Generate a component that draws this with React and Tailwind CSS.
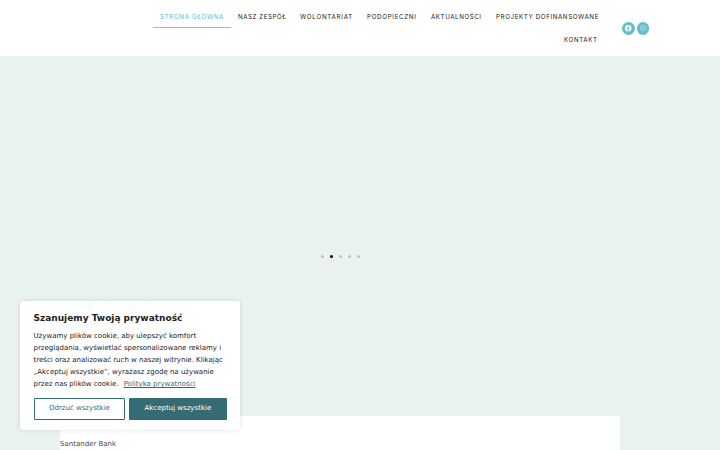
import React from 'react';

const navItems = [
  { label: 'STRONA GŁÓWNA', box: 'w-[78px]', text: 'tracking-[0.67px]', active: true },
  { label: 'NASZ ZESPÓŁ', box: 'w-[62px]', text: 'tracking-[0.55px]' },
  { label: 'WOLONTARIAT', box: 'w-[67px]', text: 'tracking-[0.75px]' },
  { label: 'PODOPIECZNI', box: 'w-[64px]', text: 'tracking-[0.69px]' },
  { label: 'AKTUALNOŚCI', box: 'w-[65px]', text: 'tracking-[0.58px]' },
  { label: 'PROJEKTY DOFINANSOWANE', box: 'w-[116px]', text: 'tracking-[0.62px]' },
  { label: 'KONTAKT', box: 'w-[48px]', text: 'tracking-[0.62px]' },
];

function NavItem({ item }) {
  return (
    <a
      href="#"
      className={`flex h-[23px] items-center justify-start whitespace-nowrap border-b pl-[7.5px] pt-[1.5px] ${item.box} ${
        item.active ? 'border-[#7cc8da] text-[#5fb9cc]' : 'border-transparent text-[#171717]'
      }`}
    >
      <span className={item.text}>{item.label}</span>
    </a>
  );
}

function Header() {
  return (
    <header className="flex h-14 bg-white">
      <nav className="ml-[140.5px] mt-[5px] flex h-[46px] w-[464px] flex-wrap justify-end font-['Inter',sans-serif] text-[6.2px] font-normal">
        {navItems.map(item => (
          <NavItem key={item.label} item={item} />
        ))}
      </nav>
      <div className="ml-[17.5px] mt-[22px] flex gap-[2px]">
        <a href="#" aria-label="Facebook" className="flex size-[12.5px] items-center justify-center rounded-full bg-[#65bdca]">
          <svg viewBox="0 0 24 24" className="size-[6.5px]">
            <circle cx="12" cy="12" r="12" fill="white" />
            <path d="M10 24v-8.5H7V12h3V9.4C10 6.4 11.8 5 14.3 5l2.3.2v2.7H15c-1.4 0-1.7.7-1.7 1.7V12h3.2l-.5 3.5h-2.7V24z" fill="#65bdca" />
          </svg>
        </a>
        <a href="#" aria-label="Instagram" className="flex size-[12.5px] items-center justify-center rounded-full bg-[#65bdca]">
          <svg viewBox="0 0 24 24" className="size-[6px]" fill="none" stroke="#c9e9ed" strokeWidth="2">
            <rect x="2" y="2" width="20" height="20" rx="5" />
            <circle cx="12" cy="12" r="4.5" />
            <circle cx="18" cy="6" r="1" fill="white" stroke="none" />
          </svg>
        </a>
      </div>
    </header>
  );
}

function Slider() {
  return (
    <section className="relative h-[360px]">
      <svg viewBox="0 0 12 24" className="absolute left-[65px] top-[110px] h-6 w-3" fill="none" stroke="#edf0f0">
        <path d="M9 5 3 12l6 7" />
      </svg>
      <svg viewBox="0 0 12 24" className="absolute left-[610px] top-[110px] h-6 w-3" fill="none" stroke="#edf0f0">
        <path d="m3 5 6 7-6 7" />
      </svg>
      <div className="flex w-[680px] justify-center gap-[6px] pt-[199.25px]">
        {[0, 1, 2, 3, 4].map(i => (
          <span key={i} className={`size-[3px] rounded-full ${i === 1 ? 'bg-black' : 'bg-[#b9c1c0]'}`} />
        ))}
      </div>
    </section>
  );
}

function CookieBanner() {
  return (
    <div className="absolute left-[20px] top-[301px] h-[129px] w-[220px] rounded-[3px] bg-white px-[13.5px] pt-[10px] text-[#212121] shadow-[0_0_5px_rgba(0,0,0,0.12)]">
      <h2 className="text-[9px] font-bold leading-[14px]">Szanujemy Twoją prywatność</h2>
      <p className="mt-[5px] whitespace-nowrap text-[7px] leading-[12px]">
        Używamy plików cookie, aby ulepszyć komfort<br />
        przeglądania, wyświetlać spersonalizowane reklamy i<br />
        treści oraz analizować ruch w naszej witrynie. Klikając<br />
        „Akceptuj wszystkie”, wyrażasz zgodę na używanie<br />
        przez nas plików cookie.
        <a href="#" className="ml-[5px] text-[#356b74] underline">Polityka prywatności</a>
      </p>
      <div className="mt-[7.5px] flex gap-[4px] text-[7px]">
        <button className="h-[22px] w-[92px] rounded-[1px] border border-[#356b74] bg-white text-[#356b74]">Odrzuć wszystkie</button>
        <button className="h-[22px] w-[97.5px] rounded-[1px] bg-[#356b74] text-white">Akceptuj wszystkie</button>
      </div>
    </div>
  );
}

export default function App() {
  return (
    <div className="relative h-[450px] w-[720px] overflow-hidden bg-[#e9f2f1] font-['DejaVu_Sans',sans-serif]">
      <Header />
      <Slider />
      <main className="ml-[60px] h-[34px] w-[560px] bg-white pt-[23px] text-[7px] leading-[11px] text-[#4b4b4b]">
        Santander Bank
      </main>
      <CookieBanner />
    </div>
  );
}
